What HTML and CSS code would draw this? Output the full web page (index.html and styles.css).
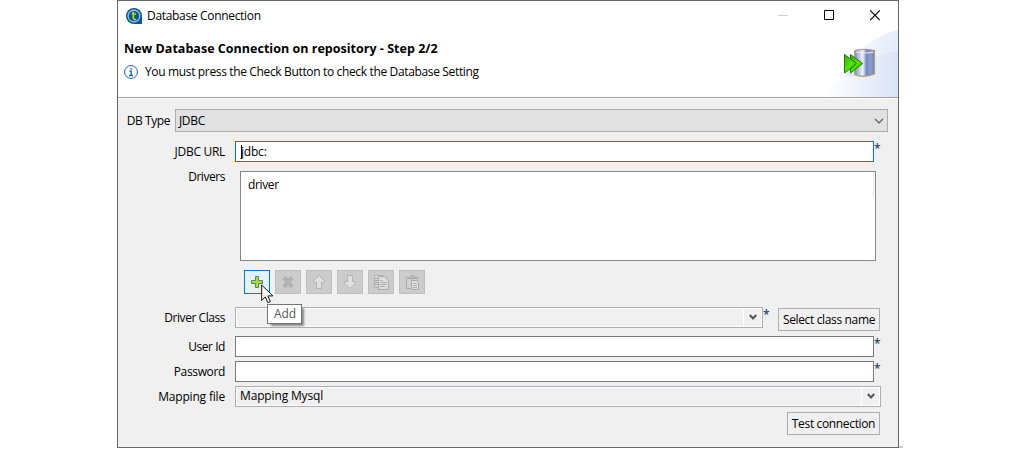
FILE: index.html
```
<!DOCTYPE html>
<html lang="en">
<head>
<meta charset="utf-8">
<title>Database Connection</title>
<link rel="stylesheet" href="styles.css">
</head>
<body>
<main class="window">
  <header class="banner">
    <div class="titlebar">
      <svg class="app-icon" width="16" height="16" viewBox="0 0 16 16"><path d="M8 0a8 8 0 0 1 8 8v8H8A8 8 0 0 1 8 0Z" fill="#0d5796"/><circle cx="8" cy="8" r="5.900" fill="none" stroke="#a9cde6" stroke-width="1.100"/><path d="M7.300 3.800v6q0 1.700 1.500 1.700h1.400M5.700 6h4.300" fill="none" stroke="#b6d51b" stroke-width="1.700"/></svg>
      <span class="title">Database Connection</span>
      <div class="controls">
        <svg width="10" height="11" viewBox="0 0 10 11"><path d="M0 5.500h10" stroke="#ccc"/></svg>
        <svg width="10" height="11" viewBox="0 0 10 11"><path d="M.5.5h9v9h-9Z" fill="none" stroke="#000"/></svg>
        <svg width="10" height="11" viewBox="0 0 10 11"><path d="M.2.400 9.800 10M9.800.400.2 10" stroke="#000" stroke-width="1.100"/></svg>
      </div>
    </div>
    <h1 class="heading">New Database Connection on repository - Step 2/2</h1>
    <p class="message">
      <svg width="14" height="14" viewBox="0 0 14 14"><circle cx="7" cy="7" r="6.400" fill="#fff" stroke="#1c62a5"/><path d="M7 3v1.700M5.400 6.100h1.800v4.300M5 10.500h4" fill="none" stroke="#1c62a5" stroke-width="1.300"/></svg>
      <span class="message-text">You must press the Check Button to check the Database Setting</span>
    </p>
    <svg class="banner-art" width="80" height="67" viewBox="0 0 80 67">
      <defs>
        <linearGradient id="sky" x1="0" x2="1" y1=".1" y2=".3"><stop offset="0" stop-color="#fff"/><stop offset=".45" stop-color="#f4f7fd"/><stop offset="1" stop-color="#e5ebfa"/></linearGradient>
        <linearGradient id="wave" x1="0" x2="1"><stop offset="0" stop-color="#fff"/><stop offset="1" stop-color="#dae2f6"/></linearGradient>
        <linearGradient id="metal" x1="0" x2="1"><stop offset="0" stop-color="#8190b6"/><stop offset=".2" stop-color="#b5c2e0"/><stop offset=".4" stop-color="#f0f5ff"/><stop offset=".6" stop-color="#7488bd"/><stop offset=".8" stop-color="#8c9dce"/><stop offset="1" stop-color="#7183b5"/></linearGradient>
        <linearGradient id="go" x1="0" x2="1" y1="0" y2="1"><stop offset="0" stop-color="#36aa12"/><stop offset=".5" stop-color="#55e400"/><stop offset="1" stop-color="#25a800"/></linearGradient>
      </defs>
      <path d="M80 0Q62 4 43 19L8 67H80Z" fill="url(#sky)"/>
      <path d="M80 21Q50 26 28 46L8 67H80Z" fill="url(#wave)"/>
      <ellipse cx="35" cy="43" rx="8" ry="4" fill="#9eaac0" opacity=".16"/>
      <path d="M36.700 20.500Q46 18 56.500 20.500V44Q46 48.500 36.700 44.500Z" fill="url(#metal)" stroke="#b19b70" stroke-width="1.200"/>
      <path d="M38 22q8.500 2 17.500 0" fill="none" stroke="#e4ecfb" stroke-width="1.200"/>
      <path d="m26.500 24.500 12.500 9-12.500 9.500Z" fill="url(#go)" stroke="#227b15"/>
      <path d="m32.500 24.500 12.200 9-12.200 9.500v-4l6-5.500-6-5Z" fill="url(#go)" stroke="#227b15"/>
    </svg>
  </header>

  <form class="form">
    <div class="row db-row">
      <label class="label db-label">DB Type</label>
      <div class="select"><span>JDBC</span><svg width="10" height="6" viewBox="0 0 10 6"><path d="m1 .8 4 4 4-4" fill="none" stroke="#555" stroke-width="1.200"/></svg></div>
    </div>
    <div class="row url-row">
      <label class="label">JDBC URL</label>
      <div class="input focused"><span class="caret"></span>jdbc:</div><span class="star">*</span>
    </div>
    <div class="row drivers-row">
      <label class="label">Drivers</label>
      <div class="list"><span>driver</span><i class="list-edge"></i></div>
    </div>
    <div class="tools">
      <div class="tool active"><svg width="24" height="22" viewBox="0 0 24 22"><path d="M10.500 5.500h3v4h4v3h-4v4h-3v-4h-4v-3h4Z" fill="#b1d34d" stroke="#4d9150"/></svg>
        <svg class="cursor" width="13" height="20" viewBox="0 0 13 20"><path d="M.7 1v15.400l3.600-3.500 2.500 5.800 2.600-1.100-2.500-5.700h5Z" fill="#fff" stroke="#15151f"/></svg>
        <div class="tooltip">Add</div>
      </div>
      <div class="tool"><svg width="24" height="22" viewBox="0 0 24 22"><path d="m8 6.500 8 9.500M16 6.500 8 16" stroke="#adadad" stroke-width="4.200"/><path d="m8.300 7 7.400 8.500M15.700 7l-7.400 8.500" stroke="#b5b5b5" stroke-width="2"/></svg></div>
      <div class="tool"><svg width="24" height="22" viewBox="0 0 24 22"><path d="m12 4.500 5.500 5.500v1.500h-3v6h-5v-6h-3V10Z" fill="#e0e0e0" stroke="#b2b2b2"/></svg></div>
      <div class="tool"><svg width="24" height="22" viewBox="0 0 24 22"><path d="m12 17.500 5.500-5.500v-1.500h-3v-6h-5v6h-3V12Z" fill="#e0e0e0" stroke="#b2b2b2"/></svg></div>
      <div class="tool"><svg width="24" height="22" viewBox="0 0 24 22"><path d="M5.500 4.500h8v12h-8Z" fill="#dadada" stroke="#aaa" stroke-opacity=".8"/><path d="M6 7.500h3M6 9.500h3M6 11.500h3M6 13.500h3" stroke="#aaa"/><path d="M9.500 5.500h6l4 4v9h-10Z" fill="#dedede" stroke="#aaa"/><path d="M11 9.500h3M11 11.500h7M11 13.500h7M11 15.500h5" stroke="#b0b0b0"/></svg></div>
      <div class="tool"><svg width="24" height="22" viewBox="0 0 24 22"><path d="M6.500 6.500h11v11h-11Z" fill="#d0d0d0" stroke="#aaa"/><path d="M8.500 7.500v-1h2l1-2h2l1 2h2v1Z" fill="#bcbcbc" stroke="#aaa"/><path d="M11.500 9.500h5l2 2v7h-7Z" fill="#e0e0e0" stroke="#aaa"/><path d="M13 12.500h4M13 14.500h4M13 16.500h4" stroke="#b0b0b0"/></svg></div>
    </div>
    <div class="row class-row">
      <label class="label">Driver Class</label>
      <div class="combo class-combo"><span></span><b class="drop"><svg width="8" height="7" viewBox="0 0 8 7"><path d="m.8 1 3.200 3.500L7.200 1" fill="none" stroke="#555" stroke-width="2"/></svg></b></div><span class="star">*</span>
      <button type="button" class="button select-button"><span>Select class name</span></button>
    </div>
    <div class="row">
      <label class="label">User Id</label>
      <div class="input"></div><span class="star">*</span>
    </div>
    <div class="row">
      <label class="label tight">Password</label>
      <div class="input"></div><span class="star">*</span>
    </div>
    <div class="row">
      <label class="label wide">Mapping file</label>
      <div class="combo"><span class="mapping">Mapping Mysql</span><b class="drop"><svg width="8" height="7" viewBox="0 0 8 7"><path d="m.8 1 3.200 3.500L7.200 1" fill="none" stroke="#555" stroke-width="2"/></svg></b></div>
    </div>
    <button type="button" class="button test-button"><span>Test connection</span></button>
  </form>
</main>
<div class="ground-line"></div>
</body>
</html>
```
FILE: styles.css
```
* { box-sizing: border-box; }
body { margin: 0; height: 449px; overflow: hidden; background: #fff; color: #000; font: 12px/16px "Open Sans", "Noto Sans", sans-serif; letter-spacing: -0.35px; white-space: nowrap; }
svg { display: block; flex: none; }
.window { width: 782px; height: 448px; margin-left: 117px; border: 1px solid #666; background: #f0f0f0; }
.banner { position: relative; height: 97px; background: #fff; border-bottom: 1px solid #a0a0a0; }
.titlebar { display: flex; align-items: center; height: 29px; padding: 0 18px 0 8px; }
.title { margin-left: 5px; flex: 1; letter-spacing: -0.32px; }
.controls { display: flex; gap: 36px; }
.heading { margin: 11px 0 0 6px; font-size: 12.5px; line-height: 16px; font-weight: 700; letter-spacing: 0.02px; }
.message { display: flex; align-items: center; gap: 7px; margin: 7px 0 0 6px; }
.banner-art { position: absolute; right: 0; bottom: 0; }

.form { display: flex; flex-direction: column; height: 349px; border-top: 1px solid #fff; }
.row { display: flex; height: 21px; margin-bottom: 4px; }
.label { flex: none; width: 107px; margin-right: 10px; padding-top: 3px; text-align: right; letter-spacing: -0.45px; }
.tight { letter-spacing: -0.35px; }
.wide { letter-spacing: -0.18px; }
.db-row { height: 23px; margin: 10px 0 9px; }
.db-label { width: 52px; margin-right: 5px; padding-top: 4px; }
.select { display: flex; align-items: center; justify-content: space-between; width: 713px; padding: 0 3px; border: 1px solid #adadad; background: #e1e1e1; }
.url-row { margin-bottom: 9px; letter-spacing: -0.2px; }
.url-row .label { letter-spacing: -0.3px; }
.input { display: flex; align-items: center; width: 639px; padding: 0 5px; border: 1px solid #7a7a7a; background: #fff; }
.focused { border-color: #0078d7; }
.caret { width: 1px; height: 14px; background: #000; margin-right: -1px; }
.star { width: 8px; color: #26446c; line-height: 16px; letter-spacing: 0; font-weight: 600; }
.drivers-row { height: 90px; margin-bottom: 9px; }
.drivers-row .label { margin-right: 15px; padding-top: 0; margin-top: -2px; }
.list { display: flex; justify-content: space-between; width: 636px; padding: 5px 1px 0 7px; border: 1px solid #828790; background: #fff; }
.list-edge { width: 1px; height: 24px; margin-top: -4px; background: #e4e4e4; }
.tools { display: flex; gap: 5px; margin-left: 126px; }
.tool { position: relative; width: 26px; height: 24px; border: 1px solid #bfbfbf; background: #ccc; }
.active { border-color: #0078d7; background: #e5f1fb; }
.cursor { position: absolute; left: 16px; top: 13px; z-index: 2; }
.tooltip { position: absolute; left: 22px; top: 33px; z-index: 1; width: 35px; height: 20px; padding-left: 6px; border: 1px solid #767676; background: #fff; color: #575757; line-height: 18px; box-shadow: 3px 3px 2px -1px #888; letter-spacing: -0.15px; }
.class-row { margin: 13px 0 8px; }
.combo { display: flex; align-items: center; justify-content: space-between; width: 646px; border: 1px solid #adadb3; background: #f0f0f0; box-shadow: inset 0 0 0 1px #fff; padding: 0 1px 0 4px; }
.class-combo { width: 528px; }
.mapping { margin-top: -2px; letter-spacing: -0.15px; }
.drop { display: flex; align-items: center; justify-content: center; width: 18px; height: 17px; border-left: 1px solid #fff; }
.button { display: flex; align-items: center; justify-content: center; height: 23px; padding: 0; border: 1px solid #adadad; border-radius: 0; background: #f0f0f0; color: #000; font: inherit; letter-spacing: inherit; }
.select-button { width: 102px; margin: 1px 0 0 7px; }
.test-button { width: 93px; margin: 1px 0 0 669px; }
.ground-line { width: 4px; height: 2px; margin: -2px 0 0 899px; background: #ccc; }
```
